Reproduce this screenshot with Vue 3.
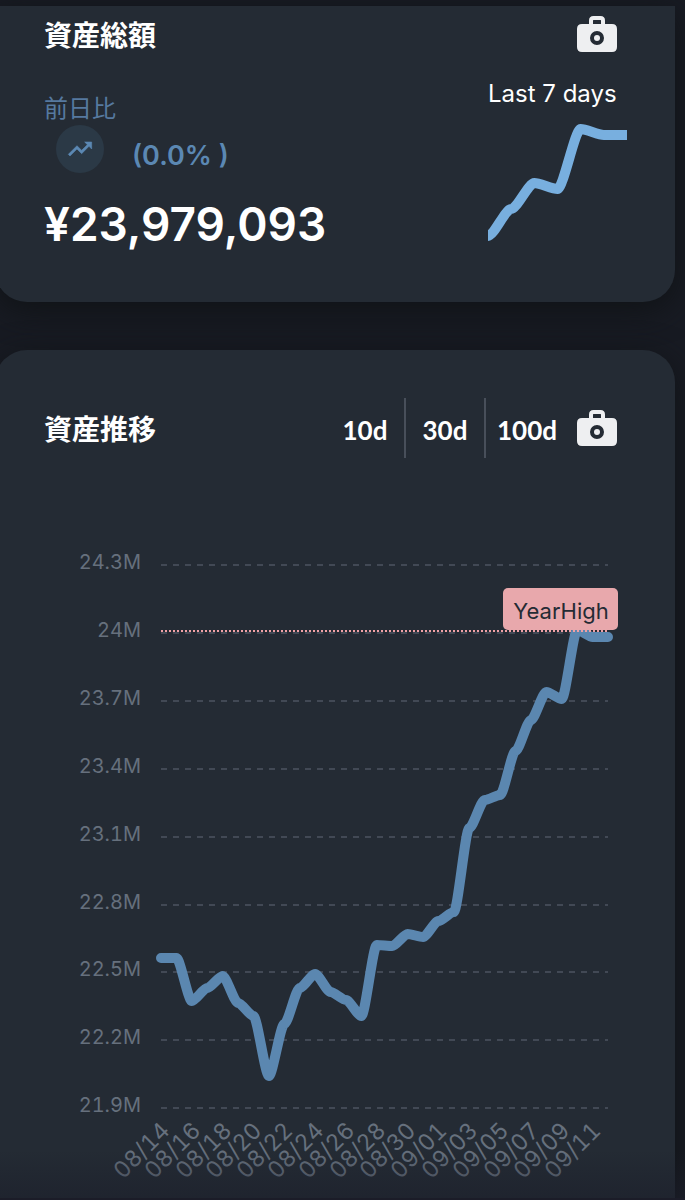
<script setup>
const ranges = ['10d', '30d', '100d']

const left = 116
const right = 563
const values = [
  458, 458, 501, 488, 476, 503, 516, 576, 524, 488, 474, 492, 500, 516, 445,
  446, 434, 437, 421, 412, 328, 300, 295, 251, 220, 192, 199, 130, 137, 137,
]
const weekly = [112, 85, 59, 65, 5, 11, 11]

// Joins the values with curves that are level at every point.
function curve(ys, x0, x1) {
  const dx = (x1 - x0) / (ys.length - 1)
  return ys
    .map((y, i) => {
      const x = x0 + dx * i
      return i === 0
        ? `M${x} ${y}`
        : `C${x - dx * 0.75} ${ys[i - 1]} ${x - dx * 0.25} ${y} ${x} ${y}`
    })
    .join(' ')
}

const trendPath = curve(values, left, right)
const weeklyPath = curve(weekly, 0, 139)

const yTicks = ['24.3M', '24M', '23.7M', '23.4M', '23.1M', '22.8M', '22.5M', '22.2M', '21.9M']
  .map((label, i) => ({ label, y: 65 + Math.round(i * 67.9) }))

const xTicks = [
  '08/14', '08/16', '08/18', '08/20', '08/22', '08/24', '08/26', '08/28',
  '08/30', '09/01', '09/03', '09/05', '09/07', '09/09', '09/11',
].map((label, i) => ({ label, x: 126 + Math.round(i * 30.8) }))
</script>

<template>
  <main class="page">
    <section class="card total">
      <header class="head">
        <h2>資産総額</h2>
        <button class="camera" type="button" aria-label="資産総額を撮影">
          <svg viewBox="0 0 42 38" width="42" height="38" aria-hidden="true">
            <path class="handle" d="M15 10V5.500q0-2.500 2.500-2.500h7q2.500 0 2.500 2.500v5" />
            <path class="body" fill-rule="evenodd" d="M6 9h30q5 0 5 5v18q0 5-5 5H6q-5 0-5-5V14q0-5 5-5ZM21 16a7 7 0 1 0 0 14a7 7 0 1 0 0-14Z" />
            <circle class="body" cx="21" cy="23" r="3" />
          </svg>
        </button>
      </header>
      <div class="summary">
        <div>
          <p class="caption">前日比</p>
          <div class="change">
            <span class="badge">
              <svg viewBox="0 0 24 24" width="28" height="28" aria-hidden="true">
                <path d="m16 6 2.290 2.290-4.880 4.880-4-4L2 16.590 3.410 18l6-6 4 4 6.300-6.290L22 12V6z" />
              </svg>
            </span>
            <span class="percent">(0.0% )</span>
          </div>
          <p class="amount">¥23,979,093</p>
        </div>
        <div class="week">
          <p>Last 7 days</p>
          <svg viewBox="0 0 139 121" width="139" height="121" aria-hidden="true">
            <path :d="weeklyPath" />
          </svg>
        </div>
      </div>
    </section>

    <section class="card history">
      <header class="head">
        <h2>資産推移</h2>
        <div class="tools">
          <div class="ranges">
            <button v-for="r in ranges" :key="r" type="button">{{ r }}</button>
          </div>
          <button class="camera" type="button" aria-label="資産推移を撮影">
            <svg viewBox="0 0 42 38" width="42" height="38" aria-hidden="true">
              <path class="handle" d="M15 10V5.500q0-2.500 2.500-2.500h7q2.500 0 2.500 2.500v5" />
              <path class="body" fill-rule="evenodd" d="M6 9h30q5 0 5 5v18q0 5-5 5H6q-5 0-5-5V14q0-5 5-5ZM21 16a7 7 0 1 0 0 14a7 7 0 1 0 0-14Z" />
              <circle class="body" cx="21" cy="23" r="3" />
            </svg>
          </button>
        </div>
      </header>
      <svg class="chart" viewBox="-1 0 583 700" role="img" aria-label="資産推移">
        <g class="ticks">
          <template v-for="t in yTicks" :key="t.label">
            <line :x1="left" :x2="right" :y1="t.y" :y2="t.y" />
            <text x="96" :y="t.y + 4" text-anchor="end">{{ t.label }}</text>
          </template>
          <text
            v-for="t in xTicks"
            :key="t.label"
            class="date"
            :x="t.x"
            y="632"
            text-anchor="end"
            :transform="`rotate(-45 ${t.x} 632)`"
          >{{ t.label }}</text>
        </g>
        <path class="trend" :d="trendPath" />
        <rect class="tag" x="458" y="88" width="115" height="42" rx="5" />
        <line class="high" :x1="left" :x2="right" y1="131" y2="131" />
        <text class="tag-text" x="516" y="119" text-anchor="middle">YearHigh</text>
      </svg>
    </section>
    <div class="fade"></div>
  </main>
</template>

<style>
body {
  background: #181b23;
}
</style>

<style scoped>
.page {
  position: relative;
  height: 100vh;
  overflow: hidden;
  box-sizing: border-box;
  padding: 6px 10px 0 0;
  color: #fff;
  font-family: Inter, "Noto Sans CJK JP", sans-serif;
}
.card {
  box-sizing: border-box;
  margin-left: -5px;
  padding: 0 48px 0 49px;
  border-radius: 32px;
  background: #242b34;
  box-shadow: 0 8px 32px #101316;
}
.total {
  padding-top: 8px;
  padding-bottom: 48px;
  border-top-left-radius: 0;
  border-top-right-radius: 0;
}
.history {
  margin-top: 48px;
  padding-top: 48px;
  padding-bottom: 48px;
}
.head {
  display: flex;
  align-items: center;
  justify-content: space-between;
  padding-right: 9px;
}
h2,
p {
  margin: 0;
}
h2 {
  font: 700 28px/40px "Noto Sans CJK JP", sans-serif;
}
button {
  padding: 0;
  border: 0;
  background: none;
  color: inherit;
  cursor: pointer;
}
.camera svg {
  display: block;
}
.handle {
  fill: none;
  stroke: #eeeff1;
  stroke-width: 4;
}
.body {
  fill: #eeeff1;
}
.summary {
  display: flex;
  justify-content: space-between;
  padding-top: 24px;
}
.caption {
  padding-top: 11px;
  color: #56799f;
  font: 400 24px/36px "Noto Sans CJK JP", sans-serif;
}
.change {
  display: flex;
  align-items: flex-end;
  gap: 28px;
  padding-left: 12px;
}
.badge {
  display: grid;
  place-items: center;
  width: 48px;
  height: 48px;
  border-radius: 50%;
  background: #2b3946;
}
.badge path {
  fill: #5b88b3;
  stroke: #5b88b3;
  stroke-width: 0.5;
  stroke-linejoin: round;
}
.percent {
  color: #5b88b3;
  font-size: 27px;
  font-weight: 600;
  line-height: 34px;
}
.amount {
  padding-top: 21px;
  font-size: 46px;
  font-weight: 600;
  line-height: 60px;
}
.week p {
  padding-top: 1px;
  font-size: 24px;
  line-height: 30px;
  white-space: nowrap;
}
.week svg {
  display: block;
  margin-top: 15px;
}
.week path {
  fill: none;
  stroke: #78afdf;
  stroke-width: 10;
}
.tools {
  display: flex;
  align-items: center;
  gap: 8px;
}
.ranges {
  display: flex;
}
.ranges button {
  width: 80px;
  height: 60px;
  padding-top: 4px;
  border-right: 2px solid #484f5a;
  font: 700 26px/32px Lato, sans-serif;
}
.ranges button:last-child {
  width: 82px;
  border-right: 0;
}
.chart {
  display: block;
  width: 100%;
  margin-top: 42px;
}
.ticks line {
  stroke: #424955;
  stroke-width: 2;
  stroke-dasharray: 6 6;
}
.ticks text {
  fill: #66707d;
  font-size: 20px;
  font-variant-numeric: tabular-nums;
}
.ticks .date {
  font-size: 23px;
}
.trend {
  fill: none;
  stroke: #5b87b0;
  stroke-width: 10;
  stroke-linecap: round;
}
.tag {
  fill: #e8a8ac;
}
.high {
  stroke: #f0a0a5;
  stroke-width: 2;
  stroke-dasharray: 2 2;
}
.tag-text {
  fill: #242b34;
  font-size: 22px;
}
.fade {
  position: absolute;
  right: 0;
  bottom: 0;
  left: 0;
  height: 48px;
  border-bottom: 2px solid #1b1c28;
  background: linear-gradient(transparent, #1b1e2a90);
  pointer-events: none;
}
</style>
